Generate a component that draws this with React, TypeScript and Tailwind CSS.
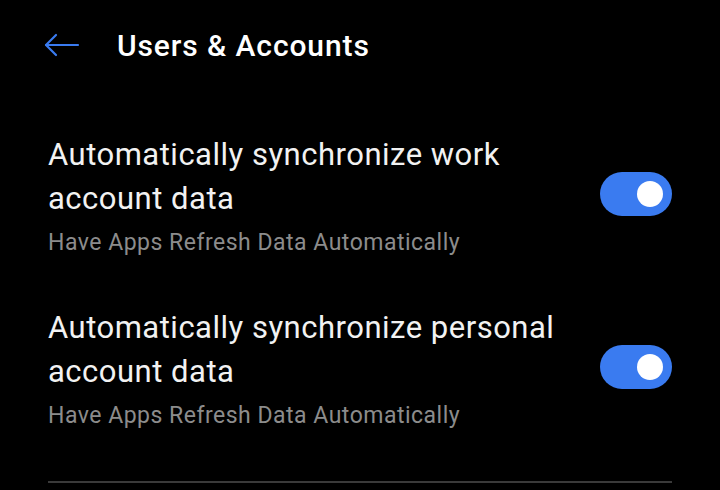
import React from 'react';

const rows = [
  { title: 'Automatically synchronize work account data', sub: 'Have Apps Refresh Data Automatically' },
  { title: 'Automatically synchronize personal account data', sub: 'Have Apps Refresh Data Automatically' },
];

const Toggle: React.FC = () => (
  <div className="w-[72px] h-[44px] mb-[4px] rounded-full bg-[#3a7bf0] flex items-center justify-end pr-[9px] shrink-0">
    <div className="w-[26px] h-[26px] rounded-full bg-white" />
  </div>
);

const App: React.FC = () => {
  return (
    <div className="w-[720px] h-[490px] bg-black overflow-hidden text-white" style={{ fontFamily: 'Roboto, sans-serif' }}>
      <div className="h-[90px] flex items-center pl-[44px]">
        <svg width="36" height="24" viewBox="0 0 36 24" fill="none" stroke="#3a7bf0" strokeWidth="2.2" strokeLinecap="round" strokeLinejoin="round">
          <path d="M2 12H34" />
          <path d="M12 2L2 12L12 22" />
        </svg>
        <h1 className="ml-[37px] text-[30px] font-medium tracking-[0.9px]">Users &amp; Accounts</h1>
      </div>
      <div className="pt-[43px] px-[48px]">
        {rows.map((r, i) => (
          <div key={i} className={`flex items-center justify-between ${i > 0 ? 'mt-[48px]' : ''}`}>
            <div className="w-[530px]">
              <div className="text-[31px] leading-[44px] tracking-[0.5px] text-[#f2f2f2]">{r.title}</div>
              <div className="text-[23px] leading-[30px] tracking-[0.5px] text-[#8c8c8c] mt-[7px]">{r.sub}</div>
            </div>
            <Toggle />
          </div>
        ))}
        <div className="mt-[50px] h-[2px] bg-[#3a3a3a] w-[624px]" />
      </div>
    </div>
  );
};

export default App;
